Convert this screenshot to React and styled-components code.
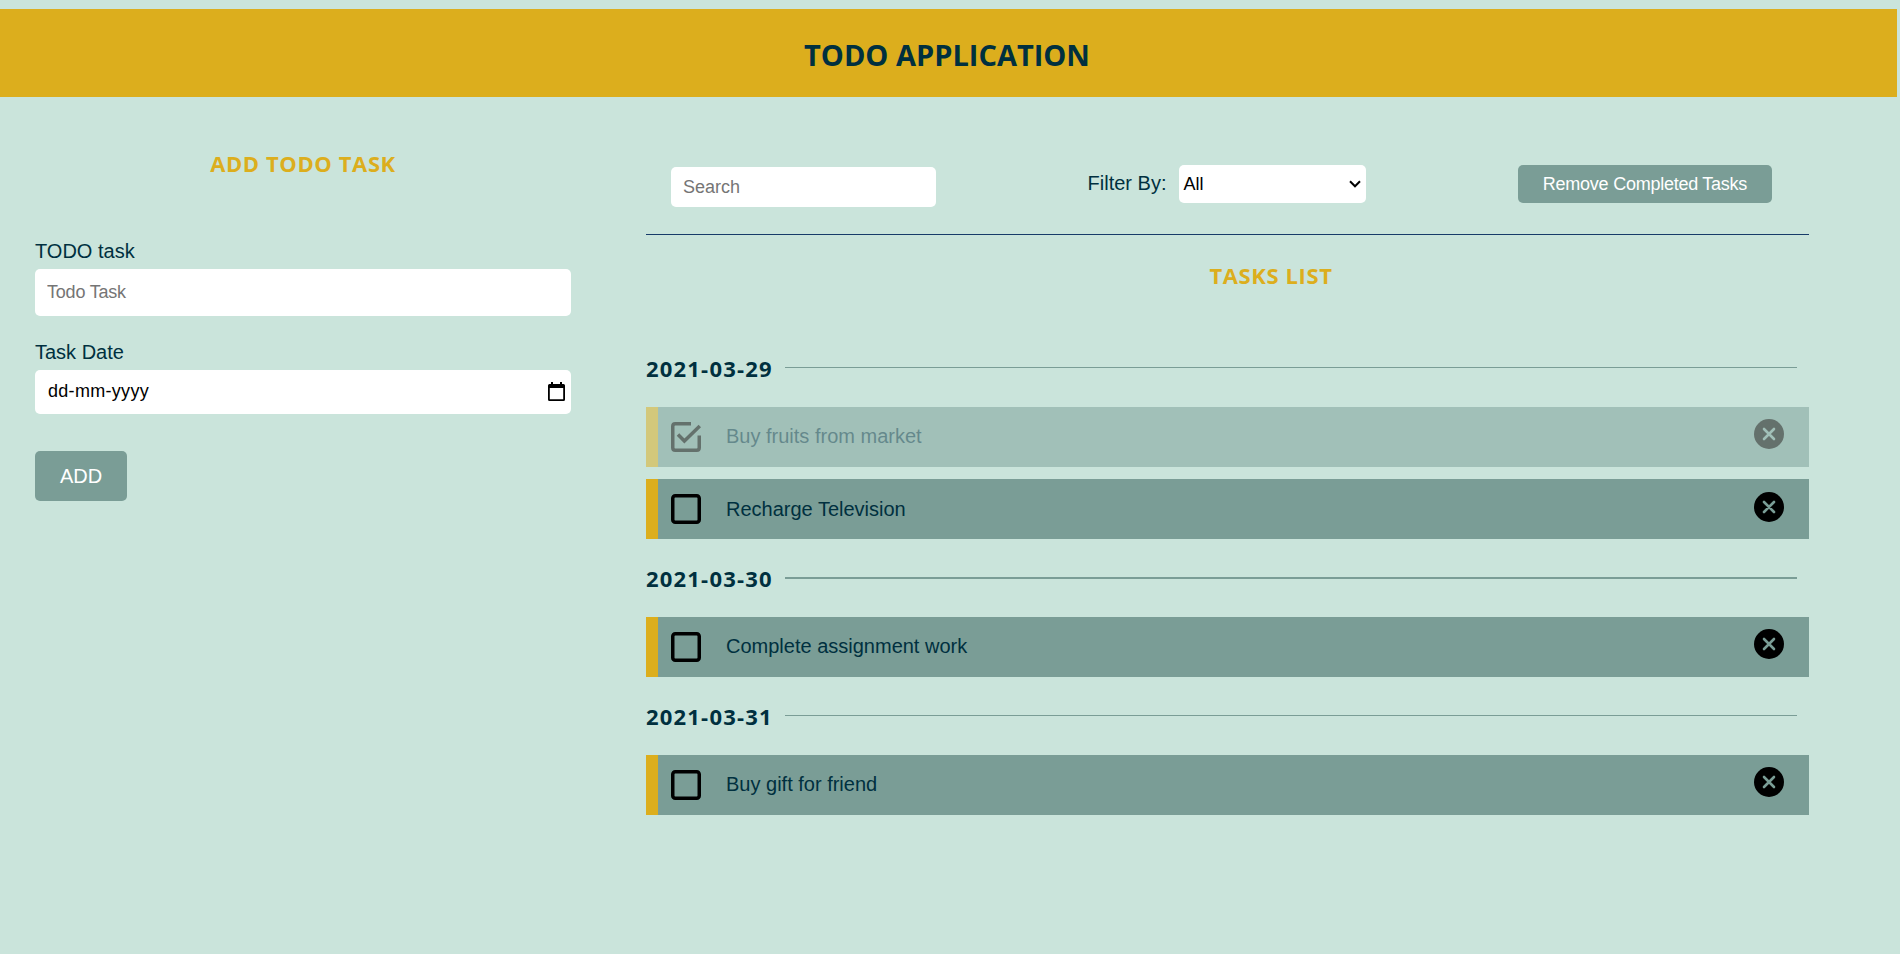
import React from "react";
import styled, { createGlobalStyle } from "styled-components";

const GlobalStyle = createGlobalStyle`
  * { box-sizing: border-box; }
  body {
    margin: 0;
    background: #cae4db;
    color: #00303f;
    font-family: "Liberation Sans", Arial, sans-serif;
    font-size: 20px;
  }
`;

const Page = styled.div`
  padding-top: 9px;
  min-height: 954px;
`;

const Header = styled.header`
  width: 1897px;
  height: 88px;
  padding: 4px 3px 0 0;
  background: #dcae1d;
  display: flex;
  align-items: center;
  justify-content: center;
`;

const Title = styled.h1`
  margin: 0;
  font: 700 29px/40px "Open Sans", sans-serif;
`;

const Columns = styled.main`
  display: flex;
  gap: 75px;
  padding-left: 35px;
`;

const SubTitle = styled.h2`
  margin: 0;
  font: 700 22px/30px "Open Sans", sans-serif;
  letter-spacing: 0.6px;
  color: #dcae1d;
  text-align: center;
`;

const AddPanel = styled.form`
  width: 536px;
  padding-top: 51px;
`;

const Field = styled.div`
  display: flex;
  flex-direction: column;
  margin-top: ${(p) => p.$top}px;
`;

const Label = styled.label`
  line-height: 24px;
  margin-bottom: 6px;
`;

const TextInput = styled.input`
  width: ${(p) => p.$width || "100%"};
  height: ${(p) => p.$height}px;
  padding: 0 12px;
  border: 0;
  border-radius: 5px;
  background: #fff;
  font: 18px "Liberation Sans", Arial, sans-serif;
  letter-spacing: ${(p) => p.$spacing || "0"};
  &::placeholder { color: #757575; }
`;

const DateBox = styled.div`
  height: 44px;
  padding: 0 6px 2px 13px;
  border-radius: 5px;
  background: #fff;
  color: #000;
  font-size: 18px;
  letter-spacing: 0.3px;
  display: flex;
  align-items: center;
  justify-content: space-between;
`;

const Button = styled.button`
  height: ${(p) => p.$height}px;
  width: ${(p) => p.$width}px;
  margin-top: ${(p) => p.$top || 0}px;
  padding: 0;
  border: 0;
  border-radius: 5px;
  background: #7a9d96;
  color: #fff;
  font: ${(p) => p.$size}px "Liberation Sans", Arial, sans-serif;
  letter-spacing: ${(p) => p.$spacing || "0"};
`;

const ListPanel = styled.section`
  width: 1163px;
`;

const Toolbar = styled.div`
  height: 138px;
  padding: 68px 37px 0 25px;
  border-bottom: 1px solid #173b69;
  display: flex;
  align-items: flex-start;
  justify-content: space-between;
`;

const SearchSlot = styled.div`
  padding-top: 2px;
`;

const Filter = styled.div`
  display: flex;
  align-items: center;
  gap: 13px;
`;

const FilterLabel = styled.label`
  padding-bottom: 2px;
`;

const SelectBox = styled.div`
  display: grid;
  align-items: center;
  width: 187px;
  & > * { grid-area: 1 / 1; }
`;

const Select = styled.select`
  appearance: none;
  width: 187px;
  height: 38px;
  padding: 0 24px 0 4px;
  border: 0;
  border-radius: 5px;
  background: #fff;
  color: #000;
  font: 18px "Liberation Sans", Arial, sans-serif;
`;

const Chevron = styled.svg`
  justify-self: end;
  margin-right: 5px;
  pointer-events: none;
`;

const ListHead = styled.div`
  padding: 25px 0 63px 87px;
`;

const DateRow = styled.div`
  display: flex;
  align-items: center;
  height: 30px;
  margin-bottom: 24px;
`;

const DateTitle = styled.h3`
  margin: 0;
  width: 139px;
  font: 700 22px/30px "Open Sans", sans-serif;
  letter-spacing: 1.2px;
`;

const Rule = styled.div`
  flex: 1;
  height: ${(p) => p.$thick || 1}px;
  margin: ${(p) => (p.$thick ? 0 : "-1px")} 12px 0 0;
  background: #7a9d96;
`;

const Group = styled.section`
  margin-bottom: 24px;
`;

const Task = styled.div`
  display: flex;
  align-items: center;
  height: 60px;
  padding: 0 25px 0 13px;
  border-left: 12px solid #dcae1d;
  background: #7a9d96;
  opacity: ${(p) => (p.$done ? 0.5 : 1)};
  & + & { margin-top: 12px; }
`;

const TaskText = styled.span`
  flex: 1;
  padding: 0 0 ${(p) => p.$lift - 4}px 25px;
  line-height: 24px;
`;

const CloseSlot = styled.span`
  display: flex;
  padding-bottom: ${(p) => p.$lift}px;
`;

const CheckIcon = ({ done }) => (
  <svg width="30" height="30" viewBox="0 0 30 30" fill="none" stroke="#000" strokeWidth="3.5">
    {done ? (
      <>
        <path d="M20 1.750H4.250Q1.750 1.750 1.750 4.250V25.750Q1.750 28.250 4.250 28.250H25.750Q28.250 28.250 28.250 25.750V13.500" />
        <path d="M7 12.500L13.400 19L28.800 4" />
      </>
    ) : (
      <rect x="1.75" y="1.75" width="26.5" height="26.5" rx="2.5" />
    )}
  </svg>
);

const CloseIcon = () => (
  <svg width="30" height="30" viewBox="0 0 30 30">
    <circle cx="15" cy="15" r="15" fill="#000" />
    <path d="M10 10L20 20M20 10L10 20" stroke="#7a9d96" strokeWidth="2.6" strokeLinecap="round" />
  </svg>
);

const CalendarIcon = () => (
  <svg width="17" height="19" viewBox="0 0 17 19">
    <path
      fillRule="evenodd"
      d="M3 0h2v2h7V0h2v2h1.500q1.500 0 1.500 1.500v14q0 1.500-1.500 1.500h-14q-1.500 0-1.500-1.500v-14q0-1.500 1.500-1.500H3zM1.800 6v11.200h13.400V6z"
    />
  </svg>
);

const groups = [
  {
    date: "2021-03-29",
    tasks: [
      { text: "Buy fruits from market", done: true, lift: 6 },
      { text: "Recharge Television", lift: 4 },
    ],
  },
  { date: "2021-03-30", thick: 2, tasks: [{ text: "Complete assignment work", lift: 6 }] },
  { date: "2021-03-31", tasks: [{ text: "Buy gift for friend", lift: 6 }] },
];

export default function App() {
  return (
    <Page>
      <GlobalStyle />
      <Header>
        <Title>TODO APPLICATION</Title>
      </Header>
      <Columns>
        <AddPanel>
          <SubTitle>ADD TODO TASK</SubTitle>
          <Field $top={61}>
            <Label>TODO task</Label>
            <TextInput $height={47} $spacing="-0.2px" placeholder="Todo Task" />
          </Field>
          <Field $top={24}>
            <Label>Task Date</Label>
            <DateBox>
              <span>dd-mm-yyyy</span>
              <CalendarIcon />
            </DateBox>
          </Field>
          <Button type="button" $height={50} $width={92} $top={37} $size={20}>
            ADD
          </Button>
        </AddPanel>
        <ListPanel>
          <Toolbar>
            <SearchSlot>
              <TextInput $height={40} $width="265px" placeholder="Search" />
            </SearchSlot>
            <Filter>
              <FilterLabel htmlFor="filter">Filter By:</FilterLabel>
              <SelectBox>
                <Select id="filter" defaultValue="All">
                  <option>All</option>
                  <option>Completed</option>
                </Select>
                <Chevron width="12" height="8" viewBox="0 0 12 8" fill="none">
                  <path d="M1 1.300L6 6.300L11 1.300" stroke="#000" strokeWidth="2" />
                </Chevron>
              </SelectBox>
            </Filter>
            <Button type="button" $height={38} $width={254} $size={18} $spacing="-0.25px">
              Remove Completed Tasks
            </Button>
          </Toolbar>
          <ListHead>
            <SubTitle>TASKS LIST</SubTitle>
          </ListHead>
          {groups.map((group) => (
            <Group key={group.date}>
              <DateRow>
                <DateTitle>{group.date}</DateTitle>
                <Rule $thick={group.thick} />
              </DateRow>
              {group.tasks.map((task) => (
                <Task key={task.text} $done={task.done}>
                  <CheckIcon done={task.done} />
                  <TaskText $lift={task.lift}>{task.text}</TaskText>
                  <CloseSlot $lift={task.lift}>
                    <CloseIcon />
                  </CloseSlot>
                </Task>
              ))}
            </Group>
          ))}
        </ListPanel>
      </Columns>
    </Page>
  );
}
